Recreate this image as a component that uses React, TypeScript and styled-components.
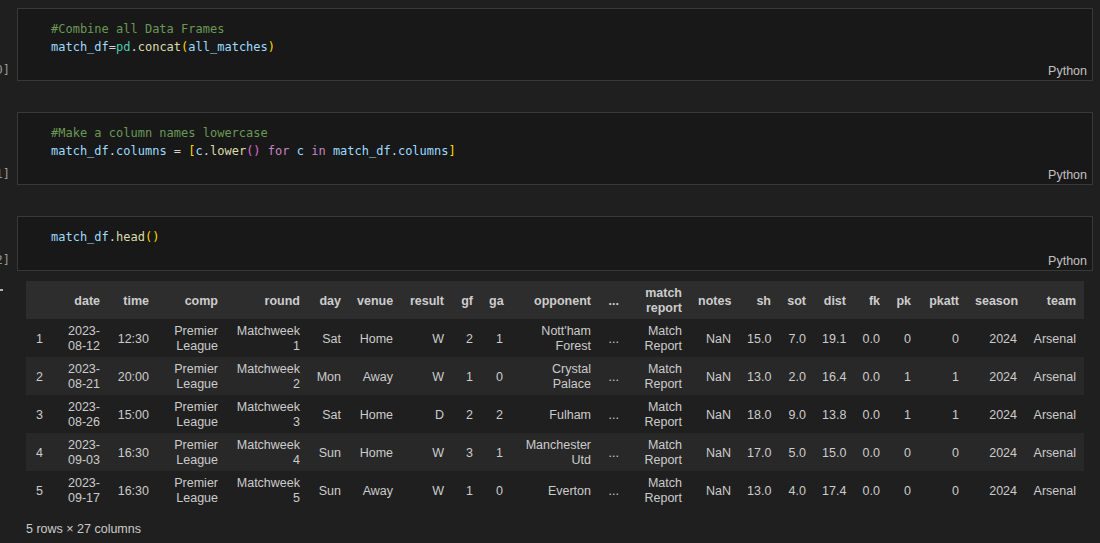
import React from "react";
import styled, { createGlobalStyle } from "styled-components";

const GlobalStyle = createGlobalStyle`
  html, body { margin: 0; padding: 0; background: #1f1f1f; }
  body { font-family: "Liberation Sans", Arial, sans-serif; color: #cccccc; overflow: hidden; }
`;

const Page = styled.div`
  width: 1100px;
  height: 543px;
  padding-top: 8px;
  box-sizing: border-box;
  display: flex;
  flex-direction: column;
`;

const CellRow = styled.div<{ $gap?: number }>`
  display: flex;
  margin-bottom: ${(p) => p.$gap ?? 0}px;
`;

const Gutter = styled.div`
  width: 17px;
  flex: none;
  display: flex;
  flex-direction: column;
  justify-content: flex-end;
  align-items: flex-end;
  padding-right: 7px;
  padding-bottom: 4px;
  box-sizing: border-box;
`;

const ExecLabel = styled.span`
  font-family: "DejaVu Sans Mono", monospace;
  font-size: 12px;
  line-height: 14px;
  color: #9a9a9a;
  white-space: nowrap;
`;

const Editor = styled.div`
  flex: 1;
  margin-right: 7px;
  background: #181818;
  border: 1px solid #383838;
  padding: 11px 5px 2px 33px;
  display: flex;
  flex-direction: column;
`;

const Code = styled.pre`
  margin: 0;
  font-family: "DejaVu Sans Mono", monospace;
  font-size: 12px;
  line-height: 18px;
  color: #d4d4d4;
`;

const Tok = styled.span<{ $c: string }>`
  color: ${(p) => p.$c};
`;

const LangLabel = styled.div`
  margin-top: 8px;
  align-self: flex-end;
  font-size: 12.5px;
  line-height: 14px;
  color: #c0c0c0;
`;

const OutputRow = styled.div`
  display: flex;
  margin-top: 10px;
`;

const OutGutter = styled.div`
  width: 26px;
  flex: none;
`;

const Marker = styled.span`
  display: block;
  width: 3px;
  height: 2px;
  margin-top: 8px;
  background: #b0b0b0;
`;

const OutBody = styled.div`
  display: flex;
  flex-direction: column;
`;

const Table = styled.table`
  width: 1058px;
  table-layout: fixed;
  border-collapse: collapse;
  font-size: 12.5px;
  line-height: 15px;
  color: #cccccc;
`;

const HeadRow = styled.tr`
  background: #2d2d2d;
`;

const BodyRow = styled.tr<{ $even: boolean }>`
  background: ${(p) => (p.$even ? "#282828" : "transparent")};
`;

const Th = styled.th`
  font-weight: bold;
  text-align: right;
  padding: 5px 8px 3px;
  height: 30px;
  vertical-align: middle;
  white-space: normal;
`;

const Td = styled.td`
  text-align: right;
  padding: 5px 8px 3px;
  height: 30px;
  vertical-align: middle;
`;

const IndexTd = styled.td`
  text-align: left;
  padding: 5px 8px 3px 10px;
  vertical-align: middle;
`;

const Footer = styled.div`
  margin-top: 13px;
  font-size: 12.5px;
  line-height: 15px;
  color: #cccccc;
`;

const C = {
  comment: "#6a9955",
  v: "#9cdcfe",
  op: "#d4d4d4",
  cls: "#4ec9b0",
  fn: "#dcdcaa",
  b1: "#ffd700",
  b2: "#da70d6",
  kw: "#c586c0",
};

const columns = [
  { key: "", w: 31 },
  { key: "date", w: 51 },
  { key: "time", w: 49 },
  { key: "comp", w: 69 },
  { key: "round", w: 82 },
  { key: "day", w: 41 },
  { key: "venue", w: 52 },
  { key: "result", w: 51 },
  { key: "gf", w: 29 },
  { key: "ga", w: 30 },
  { key: "opponent", w: 88 },
  { key: "...", w: 28 },
  { key: "match report", w: 63 },
  { key: "notes", w: 49 },
  { key: "sh", w: 40 },
  { key: "sot", w: 35 },
  { key: "dist", w: 40 },
  { key: "fk", w: 34 },
  { key: "pk", w: 31 },
  { key: "pkatt", w: 48 },
  { key: "season", w: 58 },
  { key: "team", w: 59 },
];

const rows = [
  ["1", "2023-08-12", "12:30", "Premier League", "Matchweek 1", "Sat", "Home", "W", "2", "1", "Nott'ham Forest", "...", "Match Report", "NaN", "15.0", "7.0", "19.1", "0.0", "0", "0", "2024", "Arsenal"],
  ["2", "2023-08-21", "20:00", "Premier League", "Matchweek 2", "Mon", "Away", "W", "1", "0", "Crystal Palace", "...", "Match Report", "NaN", "13.0", "2.0", "16.4", "0.0", "1", "1", "2024", "Arsenal"],
  ["3", "2023-08-26", "15:00", "Premier League", "Matchweek 3", "Sat", "Home", "D", "2", "2", "Fulham", "...", "Match Report", "NaN", "18.0", "9.0", "13.8", "0.0", "1", "1", "2024", "Arsenal"],
  ["4", "2023-09-03", "16:30", "Premier League", "Matchweek 4", "Sun", "Home", "W", "3", "1", "Manchester Utd", "...", "Match Report", "NaN", "17.0", "5.0", "15.0", "0.0", "0", "0", "2024", "Arsenal"],
  ["5", "2023-09-17", "16:30", "Premier League", "Matchweek 5", "Sun", "Away", "W", "1", "0", "Everton", "...", "Match Report", "NaN", "13.0", "4.0", "17.4", "0.0", "0", "0", "2024", "Arsenal"],
];

function DateText({ value }: { value: string }) {
  const i = value.indexOf("-");
  return (
    <>
      {value.slice(0, i + 1)}
      <wbr />
      {value.slice(i + 1)}
    </>
  );
}

function CodeCell({ label, lines, gap }: { label: string; lines: React.ReactNode[]; gap?: number }) {
  return (
    <CellRow $gap={gap}>
      <Gutter>
        <ExecLabel>{label}</ExecLabel>
      </Gutter>
      <Editor>
        <Code>
          {lines.map((l, i) => (
            <div key={i}>{l}</div>
          ))}
        </Code>
        <LangLabel>Python</LangLabel>
      </Editor>
    </CellRow>
  );
}

export default function App() {
  return (
    <>
      <GlobalStyle />
      <Page>
        <CodeCell
          label="[10]"
          gap={31}
          lines={[
            <Tok $c={C.comment}>#Combine all Data Frames</Tok>,
            <>
              <Tok $c={C.v}>match_df</Tok>
              <Tok $c={C.op}>=</Tok>
              <Tok $c={C.cls}>pd</Tok>
              <Tok $c={C.op}>.</Tok>
              <Tok $c={C.fn}>concat</Tok>
              <Tok $c={C.b1}>(</Tok>
              <Tok $c={C.v}>all_matches</Tok>
              <Tok $c={C.b1}>)</Tok>
            </>,
          ]}
        />
        <CodeCell
          label="[11]"
          gap={31}
          lines={[
            <Tok $c={C.comment}>#Make a column names lowercase</Tok>,
            <>
              <Tok $c={C.v}>match_df</Tok>
              <Tok $c={C.op}>.</Tok>
              <Tok $c={C.v}>columns</Tok>
              <Tok $c={C.op}> = </Tok>
              <Tok $c={C.b1}>[</Tok>
              <Tok $c={C.v}>c</Tok>
              <Tok $c={C.op}>.</Tok>
              <Tok $c={C.fn}>lower</Tok>
              <Tok $c={C.b2}>()</Tok>
              <Tok $c={C.op}> </Tok>
              <Tok $c={C.kw}>for</Tok>
              <Tok $c={C.op}> </Tok>
              <Tok $c={C.v}>c</Tok>
              <Tok $c={C.op}> </Tok>
              <Tok $c={C.kw}>in</Tok>
              <Tok $c={C.op}> </Tok>
              <Tok $c={C.v}>match_df</Tok>
              <Tok $c={C.op}>.</Tok>
              <Tok $c={C.v}>columns</Tok>
              <Tok $c={C.b1}>]</Tok>
            </>,
          ]}
        />
        <CodeCell
          label="[12]"
          lines={[
            <>
              <Tok $c={C.v}>match_df</Tok>
              <Tok $c={C.op}>.</Tok>
              <Tok $c={C.fn}>head</Tok>
              <Tok $c={C.b1}>()</Tok>
            </>,
          ]}
        />
        <OutputRow>
          <OutGutter>
            <Marker />
          </OutGutter>
          <OutBody>
            <Table>
              <colgroup>
                {columns.map((c, i) => (
                  <col key={i} style={{ width: c.w }} />
                ))}
              </colgroup>
              <thead>
                <HeadRow>
                  {columns.map((c, i) => (
                    <Th key={i}>{c.key}</Th>
                  ))}
                </HeadRow>
              </thead>
              <tbody>
                {rows.map((r, ri) => (
                  <BodyRow key={ri} $even={ri % 2 === 1}>
                    {r.map((v, ci) =>
                      ci === 0 ? (
                        <IndexTd key={ci}>{v}</IndexTd>
                      ) : (
                        <Td key={ci}>{ci === 1 ? <DateText value={v} /> : v}</Td>
                      )
                    )}
                  </BodyRow>
                ))}
              </tbody>
            </Table>
            <Footer>5 rows × 27 columns</Footer>
          </OutBody>
        </OutputRow>
      </Page>
    </>
  );
}
